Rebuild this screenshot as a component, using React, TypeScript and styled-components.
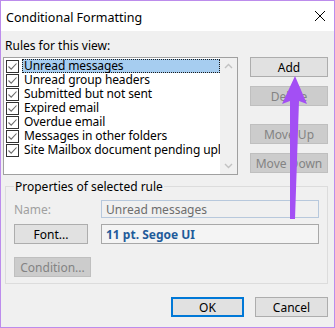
import React from 'react'
import styled, { createGlobalStyle, css } from 'styled-components'

const FONT = '"Segoe UI", "Noto Sans", "Liberation Sans", sans-serif'

const GlobalStyle = createGlobalStyle`
  html, body {
    margin: 0;
    padding: 0;
    background: #ffffff;
  }
  * {
    box-sizing: border-box;
  }
`

const Window = styled.div`
  position: relative;
  width: 335px;
  height: 328px;
  border: 1px solid #bc8cec;
  background-color: #f0f0f0;
  font-family: ${FONT};
  font-size: 12px;
  color: #000000;
  display: flex;
  flex-direction: column;
  overflow: hidden;
`

const TitleBar = styled.div`
  height: 30px;
  background-color: #ffffff;
  display: flex;
  align-items: center;
  justify-content: space-between;
  padding: 0 8px 0 5px;
`

const Title = styled.span`
  font-size: 12.5px;
  padding-top: 2px;
`

const Body = styled.div`
  flex: 1;
  display: flex;
  flex-direction: column;
  padding: 7px 6px 0 2px;
`

const SectionLabel = styled.div`
  height: 15px;
  line-height: 15px;
  padding-left: 2px;
  margin-bottom: 4px;
`

const TopRow = styled.div`
  display: flex;
  align-items: flex-start;
  justify-content: space-between;
`

const ListBox = styled.div`
  width: 235px;
  height: 118px;
  border: 1px solid #a0a0a0;
  background-color: #ffffff;
  display: flex;
`

const ListItems = styled.div`
  flex: 1;
  padding: 1px 0 0 2px;
  overflow: hidden;
`

const Row = styled.div`
  height: 14px;
  display: flex;
  align-items: center;
  white-space: nowrap;
`

const CheckBox = styled.span`
  flex: none;
  width: 13px;
  height: 13px;
  border: 1px solid #333333;
  background-color: #ffffff;
  display: flex;
  align-items: center;
  justify-content: center;
  margin-right: 3px;
`

const ItemText = styled.span<{ $selected?: boolean }>`
  flex: 1;
  height: 14px;
  line-height: 12px;
  padding-left: 1px;
  letter-spacing: -0.1px;
  border: 1px solid transparent;
  ${(p) =>
    p.$selected &&
    css`
      background-color: #a6cdf0;
      border: 1px dotted #1a1a1a;
    `}
`

const ScrollBar = styled.div`
  flex: none;
  width: 17px;
  background-color: #f0f0f0;
  display: flex;
  flex-direction: column;
  justify-content: space-between;
  align-items: center;
  padding: 5px 0;
`

const ButtonColumn = styled.div`
  width: 78px;
  display: flex;
  flex-direction: column;
`

const Button = styled.div<{ $disabled?: boolean; $width?: number; $gap?: number; $default?: boolean }>`
  width: ${(p) => p.$width ?? 78}px;
  height: 20px;
  margin-top: ${(p) => p.$gap ?? 0}px;
  display: flex;
  align-items: center;
  justify-content: center;
  background-color: ${(p) => (p.$disabled ? '#cccccc' : '#e1e1e1')};
  border: ${(p) => (p.$default ? '2px solid #0078d7' : p.$disabled ? '1px solid #bfbfbf' : '1px solid #adadad')};
  color: ${(p) => (p.$disabled ? '#838383' : '#000000')};
`

const GroupBox = styled.fieldset`
  margin: 3px 0 0 2px;
  padding: 2px 8px 6px 8px;
  height: 106px;
  border: 1px solid #dcdcdc;
  display: flex;
  flex-direction: column;
`

const Legend = styled.legend`
  padding: 0 1px;
  margin-left: 0;
  font-size: 12px;
`

const FieldRow = styled.div<{ $gap?: number }>`
  display: flex;
  align-items: center;
  margin-top: ${(p) => p.$gap ?? 0}px;
`

const FieldLabel = styled.span`
  width: 87px;
  color: #a0a0a0;
`

const TextBox = styled.div<{ $bold?: boolean }>`
  width: 218px;
  height: ${(p) => (p.$bold ? 20 : 18)}px;
  display: flex;
  align-items: center;
  padding-left: 4px;
  background-color: ${(p) => (p.$bold ? '#f4f4f4' : '#f0f0f0')};
  border: 1px solid ${(p) => (p.$bold ? '#a8a8a8' : '#b7c8dc')};
  color: ${(p) => (p.$bold ? '#1f5b9a' : '#6d6d6d')};
  font-weight: ${(p) => (p.$bold ? 700 : 400)};
  margin-left: ${(p) => (p.$bold ? 13 : 0)}px;
`

const Footer = styled.div`
  display: flex;
  justify-content: flex-end;
  gap: 11px;
  margin-top: 13px;
`

const Arrow = styled.svg`
  position: absolute;
  left: 270px;
  top: 40px;
  pointer-events: none;
`

const rules = [
  'Unread messages',
  'Unread group headers',
  'Submitted but not sent',
  'Expired email',
  'Overdue email',
  'Messages in other folders',
  'Site Mailbox document pending upload',
]

const Check = () => (
  <svg width="11" height="11" viewBox="0 0 11 11">
    <path d="M1.5 5.5 L4.2 8.2 L9.5 2.5" fill="none" stroke="#6b6b6b" strokeWidth="1.1" />
  </svg>
)

const Chevron = ({ up }: { up?: boolean }) => (
  <svg width="9" height="6" viewBox="0 0 9 6">
    <path d={up ? 'M1 5 L4.5 1.5 L8 5' : 'M1 1 L4.5 4.5 L8 1'} fill="none" stroke="#c2c2c2" strokeWidth="1.4" />
  </svg>
)

const CloseIcon = () => (
  <svg width="12" height="12" viewBox="0 0 12 12">
    <path d="M1 1 L11 11 M11 1 L1 11" stroke="#000000" strokeWidth="1" />
  </svg>
)

const App = (): JSX.Element => (
  <>
    <GlobalStyle />
    <Window>
      <TitleBar>
        <Title>Conditional Formatting</Title>
        <CloseIcon />
      </TitleBar>
      <Body>
        <SectionLabel>Rules for this view:</SectionLabel>
        <TopRow>
          <ListBox>
            <ListItems>
              {rules.map((rule, i) => (
                <Row key={rule}>
                  <CheckBox>
                    <Check />
                  </CheckBox>
                  <ItemText $selected={i === 0}>{rule}</ItemText>
                </Row>
              ))}
            </ListItems>
            <ScrollBar>
              <Chevron up />
              <Chevron />
            </ScrollBar>
          </ListBox>
          <ButtonColumn>
            <Button>Add</Button>
            <Button $disabled $gap={9}>Delete</Button>
            <Button $disabled $gap={18}>Move Up</Button>
            <Button $disabled $gap={9}>Move Down</Button>
          </ButtonColumn>
        </TopRow>
        <GroupBox>
          <Legend>Properties of selected rule</Legend>
          <FieldRow $gap={3}>
            <FieldLabel>Name:</FieldLabel>
            <TextBox>Unread messages</TextBox>
          </FieldRow>
          <FieldRow $gap={6}>
            <Button $width={74}>Font...</Button>
            <TextBox $bold>11 pt. Segoe UI</TextBox>
          </FieldRow>
          <FieldRow $gap={13}>
            <Button $disabled $width={77}>Condition...</Button>
          </FieldRow>
        </GroupBox>
        <Footer>
          <Button $default $width={73}>OK</Button>
          <Button $width={73}>Cancel</Button>
        </Footer>
      </Body>
      <Arrow width="50" height="185" viewBox="0 0 50 185">
        <path
          d="M24 35 L36 63 L28 60 L24 178 L19 178 L19 60 L11 63 Z"
          fill="#a34ff4"
        />
      </Arrow>
    </Window>
  </>
)

export default App
